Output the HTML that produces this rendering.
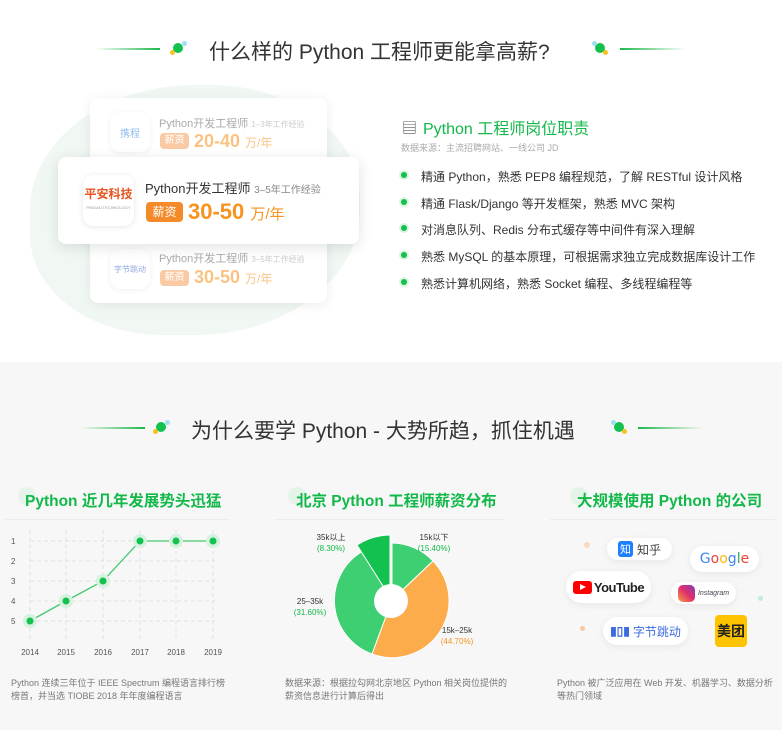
<!DOCTYPE html>
<html><head><meta charset="utf-8"><style>
*{margin:0;padding:0;box-sizing:border-box}
body{width:782px;height:730px;overflow:hidden;font-family:"Liberation Sans","Noto Sans CJK SC",sans-serif;background:#fff;position:relative;color:#333}
.abs{position:absolute}
.top{position:absolute;left:0;top:0;width:782px;height:362px;background:#fff}
.bot{position:absolute;left:0;top:362px;width:782px;height:368px;background:#f7f7f7}
.title{position:absolute;font-size:21px;color:#333;white-space:nowrap}
.line{position:absolute;height:2px}
.card{position:absolute;background:#fff;border-radius:8px;box-shadow:0 2px 12px rgba(0,0,0,.08)}
.logo{position:absolute;background:#fff;border-radius:10px;box-shadow:0 1px 6px rgba(0,0,0,.1);display:flex;align-items:center;justify-content:center}
.pay{position:absolute;background:#f6a05a;color:#fff;border-radius:4px;text-align:center}
.num{position:absolute;color:#f7931e;font-weight:bold;white-space:nowrap}
.li{position:absolute;left:421px;font-size:12px;color:#333;white-space:nowrap}
.dot{position:absolute;left:401px;width:6px;height:6px;border-radius:50%;background:#13c14f;box-shadow:0 0 0 2px #d8f3e0}
.h3{position:absolute;font-size:15.5px;color:#13b84a;font-weight:bold;white-space:nowrap}
.sep{position:absolute;height:1px;background:#ececec}
.note{position:absolute;font-size:9px;color:#777;line-height:13px}
.pill{position:absolute;background:#fff;border-radius:20px;box-shadow:0 2px 8px rgba(0,0,0,.07);display:flex;align-items:center;justify-content:center}
</style></head><body>
<div class="top">
 <div class="abs" style="left:30px;top:85px;width:330px;height:250px;border-radius:50% 45% 50% 40%;background:#f1f8f3"></div>
 <div class="line" style="left:95px;top:48px;width:65px;background:linear-gradient(90deg,#fff,#1cb84a)"></div>
 <div class="abs" style="left:173px;top:43px;width:10px;height:10px;border-radius:50%;background:#13c14f"></div>
 <div class="abs" style="left:170px;top:50px;width:5px;height:5px;border-radius:50%;background:#f7c21e"></div>
 <div class="abs" style="left:182px;top:41px;width:5px;height:5px;border-radius:50%;background:#9fe0f0"></div>
 <div class="title" style="left:209px;top:36px">什么样的 Python 工程师更能拿高薪?</div>
 <div class="abs" style="left:595px;top:43px;width:10px;height:10px;border-radius:50%;background:#13c14f"></div>
 <div class="abs" style="left:592px;top:41px;width:5px;height:5px;border-radius:50%;background:#9fe0f0"></div>
 <div class="abs" style="left:603px;top:50px;width:5px;height:5px;border-radius:50%;background:#f7c21e"></div>
 <div class="line" style="left:620px;top:48px;width:65px;background:linear-gradient(90deg,#1cb84a,#fff)"></div>

 <div class="card" style="left:90px;top:98px;width:237px;height:205px"></div>
 <div class="logo" style="left:110px;top:112px;width:40px;height:40px;font-size:10px;color:#4a90e2;opacity:.6">携程</div>
 <div class="abs" style="left:159px;top:115px;font-size:11px;color:#aaa;white-space:nowrap">Python开发工程师 <span style="font-size:8px;color:#ccc">1–3年工作经验</span></div>
 <div class="pay" style="left:160px;top:133px;width:29px;height:16px;font-size:10px;line-height:16px;opacity:.55">薪资</div>
 <div class="num" style="left:194px;top:131px;font-size:18px;opacity:.55">20-40 <span style="font-size:12px;font-weight:normal">万/年</span></div>
 <div class="logo" style="left:110px;top:249px;width:40px;height:40px;font-size:8px;color:#4a70d0;opacity:.6">字节跳动</div>
 <div class="abs" style="left:159px;top:250px;font-size:11px;color:#aaa;white-space:nowrap">Python开发工程师 <span style="font-size:8px;color:#ccc">3–5年工作经验</span></div>
 <div class="pay" style="left:160px;top:270px;width:29px;height:16px;font-size:10px;line-height:16px;opacity:.55">薪资</div>
 <div class="num" style="left:194px;top:267px;font-size:18px;opacity:.55">30-50 <span style="font-size:12px;font-weight:normal">万/年</span></div>

 <div class="card" style="left:58px;top:157px;width:301px;height:87px;box-shadow:0 3px 14px rgba(0,0,0,.12)"></div>
 <div class="logo" style="left:83px;top:175px;width:51px;height:51px;flex-direction:column;font-size:12px;color:#e8541e;font-weight:bold;line-height:13px">平安科技<span style="font-size:4px;color:#999;font-weight:normal">PINGAN TECHNOLOGY</span></div>
 <div class="abs" style="left:145px;top:178px;font-size:13px;color:#333;white-space:nowrap">Python开发工程师 <span style="font-size:10px;color:#888">3–5年工作经验</span></div>
 <div class="pay" style="left:146px;top:202px;width:37px;height:20px;font-size:12px;line-height:20px;background:#f58a2a">薪资</div>
 <div class="num" style="left:188px;top:199px;font-size:22px">30-50 <span style="font-size:15px;font-weight:normal">万/年</span></div>

 <div class="abs" style="left:402px;top:117px;font-size:15px;color:#555">&#9636;</div>
 <div class="abs" style="left:423px;top:115px;font-size:16px;color:#13b84a;white-space:nowrap">Python 工程师岗位职责</div>
 <div class="abs" style="left:401px;top:141px;font-size:9px;color:#aaa;white-space:nowrap">数据来源：主流招聘网站、一线公司 JD</div>
 <div class="dot" style="top:172px"></div><div class="li" style="top:168px">精通 Python，熟悉 PEP8 编程规范，了解 RESTful 设计风格</div>
 <div class="dot" style="top:199px"></div><div class="li" style="top:195px">精通 Flask/Django 等开发框架，熟悉 MVC 架构</div>
 <div class="dot" style="top:225px"></div><div class="li" style="top:221px">对消息队列、Redis 分布式缓存等中间件有深入理解</div>
 <div class="dot" style="top:252px"></div><div class="li" style="top:248px">熟悉 MySQL 的基本原理，可根据需求独立完成数据库设计工作</div>
 <div class="dot" style="top:279px"></div><div class="li" style="top:275px">熟悉计算机网络，熟悉 Socket 编程、多线程编程等</div>
</div>

<div class="bot"></div>
<div class="line" style="left:80px;top:427px;width:65px;background:linear-gradient(90deg,#f7f7f7,#1cb84a)"></div>
<div class="abs" style="left:156px;top:422px;width:10px;height:10px;border-radius:50%;background:#13c14f"></div>
<div class="abs" style="left:153px;top:429px;width:5px;height:5px;border-radius:50%;background:#f7c21e"></div>
<div class="abs" style="left:165px;top:420px;width:5px;height:5px;border-radius:50%;background:#9fe0f0"></div>
<div class="title" style="left:191px;top:415px">为什么要学 Python - 大势所趋，抓住机遇</div>
<div class="abs" style="left:614px;top:422px;width:10px;height:10px;border-radius:50%;background:#13c14f"></div>
<div class="abs" style="left:611px;top:420px;width:5px;height:5px;border-radius:50%;background:#9fe0f0"></div>
<div class="abs" style="left:622px;top:429px;width:5px;height:5px;border-radius:50%;background:#f7c21e"></div>
<div class="line" style="left:638px;top:427px;width:65px;background:linear-gradient(90deg,#1cb84a,#f7f7f7)"></div>

<div class="abs" style="left:18px;top:487px;width:18px;height:18px;border-radius:50%;background:#e5f4e9"></div>
<div class="h3" style="left:25px;top:489px">Python 近几年发展势头迅猛</div>
<div class="sep" style="left:5px;top:519px;width:225px"></div>
<div class="abs" style="left:288px;top:487px;width:18px;height:18px;border-radius:50%;background:#e5f4e9"></div>
<div class="h3" style="left:296px;top:489px">北京 Python 工程师薪资分布</div>
<div class="sep" style="left:275px;top:519px;width:230px"></div>
<div class="abs" style="left:570px;top:487px;width:18px;height:18px;border-radius:50%;background:#e5f4e9"></div>
<div class="h3" style="left:577px;top:489px">大规模使用 Python 的公司</div>
<div class="sep" style="left:550px;top:519px;width:225px"></div>

<svg class="abs" style="left:0;top:525px" width="240" height="140" viewBox="0 525 240 140">
 <g stroke="#e2e2e2" stroke-dasharray="4 3" stroke-width="1">
  <line x1="30" y1="541" x2="215" y2="541"/><line x1="30" y1="561" x2="215" y2="561"/><line x1="30" y1="581" x2="215" y2="581"/><line x1="30" y1="601" x2="215" y2="601"/><line x1="30" y1="621" x2="215" y2="621"/>
  <line x1="30" y1="530" x2="30" y2="640"/><line x1="66" y1="530" x2="66" y2="640"/><line x1="103" y1="530" x2="103" y2="640"/><line x1="140" y1="530" x2="140" y2="640"/><line x1="176" y1="530" x2="176" y2="640"/><line x1="213" y1="530" x2="213" y2="640"/>
 </g>
 <polyline points="30,621 66,601 103,581 140,541 176,541 213,541" fill="none" stroke="#45c870" stroke-width="1.3"/>
 <g fill="#d6f2de"><circle cx="30" cy="621" r="7"/><circle cx="66" cy="601" r="7"/><circle cx="103" cy="581" r="7"/><circle cx="140" cy="541" r="7"/><circle cx="176" cy="541" r="7"/><circle cx="213" cy="541" r="7"/></g>
 <g fill="#13c14f"><circle cx="30" cy="621" r="3.5"/><circle cx="66" cy="601" r="3.5"/><circle cx="103" cy="581" r="3.5"/><circle cx="140" cy="541" r="3.5"/><circle cx="176" cy="541" r="3.5"/><circle cx="213" cy="541" r="3.5"/></g>
 <g font-size="8" fill="#555" font-family="Liberation Sans"><text x="11" y="544">1</text><text x="11" y="564">2</text><text x="11" y="584">3</text><text x="11" y="604">4</text><text x="11" y="624">5</text>
 <g text-anchor="middle"><text x="30" y="655">2014</text><text x="66" y="655">2015</text><text x="103" y="655">2016</text><text x="140" y="655">2017</text><text x="176" y="655">2018</text><text x="213" y="655">2019</text></g></g>
</svg>
<div class="note" style="left:11px;top:677px;width:215px">Python 连续三年位于 IEEE Spectrum 编程语言排行榜榜首，并当选 TIOBE 2018 年年度编程语言</div>

<svg class="abs" style="left:280px;top:525px" width="230" height="140" viewBox="280 525 230 140">
 <g stroke="#fff" stroke-width="1">
  <path d="M392 600 L392 543 A57 57 0 0 1 433 561 Z" fill="#3dcf72"/>
  <path d="M392 600 L433 561 A57 57 0 0 1 372 654 Z" fill="#fdac4b"/>
  <path d="M392 600 L372 654 A57 57 0 0 1 363 551 Z" fill="#3dcf72"/>
  <path d="M390 597 L390 535 A62 62 0 0 0 357 545 Z" fill="#13c14f"/>
 </g>
 <circle cx="391" cy="601" r="17" fill="#fff"/>
 <g font-size="8" font-family="Liberation Sans,Noto Sans CJK SC" text-anchor="middle">
  <text x="331" y="540" fill="#333">35k以上</text><text x="331" y="551" fill="#13b84a">(8.30%)</text>
  <text x="434" y="540" fill="#333">15k以下</text><text x="434" y="551" fill="#13b84a">(15.40%)</text>
  <text x="310" y="604" fill="#333">25–35k</text><text x="310" y="615" fill="#13b84a">(31.60%)</text>
  <text x="457" y="633" fill="#333">15k–25k</text><text x="457" y="644" fill="#f7931e">(44.70%)</text>
 </g>
</svg>
<div class="note" style="left:285px;top:677px;width:225px">数据来源：根据拉勾网北京地区 Python 相关岗位提供的薪资信息进行计算后得出</div>

<div class="abs" style="left:584px;top:542px;width:6px;height:6px;border-radius:50%;background:#fbd9c0"></div>
<div class="abs" style="left:580px;top:626px;width:5px;height:5px;border-radius:50%;background:#f8c8a0"></div>
<div class="abs" style="left:758px;top:596px;width:5px;height:5px;border-radius:50%;background:#c2ebe0"></div>
<div class="pill" style="left:607px;top:538px;width:65px;height:22px;font-size:12px;color:#444"><span style="background:#1e80ff;color:#fff;border-radius:3px;padding:0 2px;margin-right:4px;font-size:11px">知</span>知乎</div>
<div class="pill" style="left:690px;top:546px;width:69px;height:26px;font-size:14px;font-family:'DejaVu Sans',sans-serif"><span style="color:#4285f4">G</span><span style="color:#ea4335">o</span><span style="color:#fbbc05">o</span><span style="color:#4285f4">g</span><span style="color:#34a853">l</span><span style="color:#ea4335">e</span></div>
<div class="pill" style="left:566px;top:571px;width:85px;height:32px;font-size:13px;font-weight:bold;letter-spacing:-.5px;color:#222"><span style="display:inline-block;width:19px;height:13px;background:#f00;border-radius:3px;margin-right:2px;position:relative"><span style="position:absolute;left:7px;top:3px;border-left:6px solid #fff;border-top:3.5px solid transparent;border-bottom:3.5px solid transparent"></span></span>YouTube</div>
<div class="pill" style="left:671px;top:582px;width:65px;height:22px;font-size:7px;color:#445;font-style:italic"><span style="display:inline-block;width:17px;height:17px;border-radius:5px;background:linear-gradient(45deg,#f9a341,#e1306c,#833ab4);margin-right:3px"></span>Instagram</div>
<div class="pill" style="left:603px;top:617px;width:85px;height:28px;font-size:12px;color:#3c6be0"><span style="color:#3c6be0;font-weight:bold;margin-right:3px">▮▯▮</span>字节跳动</div>
<div class="abs" style="left:715px;top:615px;width:32px;height:32px;background:#ffc300;border-radius:4px;font-size:14px;font-weight:bold;color:#222;text-align:center;line-height:32px">美团</div>
<div class="note" style="left:557px;top:677px;width:220px">Python 被广泛应用在 Web 开发、机器学习、数据分析等热门领域</div>
</body></html>
